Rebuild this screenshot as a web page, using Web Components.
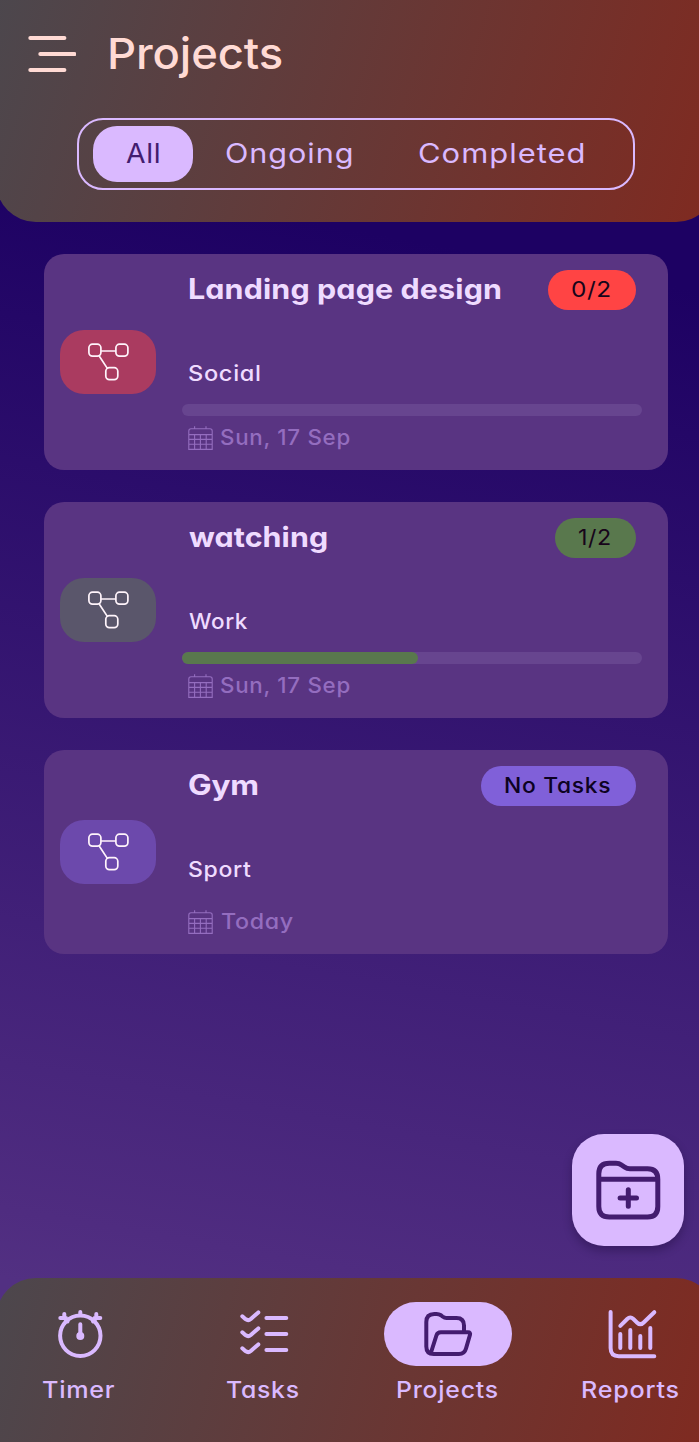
<!DOCTYPE html>
<html lang="en">
<head>
<meta charset="utf-8">
<title>Projects</title>
<style>
html,body{margin:0;height:100%;overflow:hidden;background:#1d0163}
body{font-family:Inter,"Open Sans",sans-serif}
</style>
</head>
<body>
<projects-screen></projects-screen>
<script>
// Text set to a given ink width: glyphs are widened first, the rest goes to letter spacing.
customElements.define('fit-text', class extends HTMLElement{
  constructor(){super();this.attachShadow({mode:'open'}).innerHTML=`<style>
    :host{display:inline-block;flex:none;white-space:nowrap;font-feature-settings:"cv11"}
    span{display:inline-block;transform-origin:0 50%}
  </style><span><slot></slot></span>`}
  connectedCallback(){
    const w=+this.getAttribute('w'),s=this.shadowRoot.querySelector('span'),t=this.textContent,c=getComputedStyle(this);
    const g=document.createElement('canvas').getContext('2d');
    g.font=`${c.fontWeight} ${c.fontSize} ${c.fontFamily}`;
    const m=g.measureText(t),l=-m.actualBoundingBoxLeft,r=m.width-m.actualBoundingBoxRight;
    const ink=s.getBoundingClientRect().width-l-r,gaps=t.length-1;
    const track=(parseFloat(c.getPropertyValue('--track'))||0)*parseFloat(c.fontSize);
    const sx=Math.min(1.14,Math.max(1,w/(ink+gaps*track)));
    s.style.letterSpacing=((w-.6)/sx-ink)/gaps+'px';
    s.style.transform=`scaleX(${sx})`;
    s.style.marginLeft=(-.2-l*sx)+'px';
    this.style.width=w+'px';
  }
});

customElements.define('filter-tab', class extends HTMLElement{
  constructor(){super();this.attachShadow({mode:'open'}).innerHTML=`<style>
    :host{display:flex;align-items:center;height:56px;box-sizing:border-box;padding:0 33.2px;border-radius:24px;color:#dab9ff;font-size:27.4px;line-height:53px;--track:.035}
    :host([active]){background:#dab9ff;color:#431c6f}
    ::slotted(fit-text){margin-top:-2px}
  </style><slot></slot>`}
});

customElements.define('app-header', class extends HTMLElement{
  constructor(){super();this.attachShadow({mode:'open'}).innerHTML=`<style>
    :host{display:block;box-sizing:border-box;width:720px;height:222px;margin-left:-4px;padding:18px 0 0 32px;border-radius:0 0 40px 40px;background:linear-gradient(107deg,#4c474d,#802a20)}
    .top{display:flex;align-items:center;height:72px;gap:34.5px;color:#ffdad4;font-size:42.8px;font-weight:500}
    .top fit-text{position:relative;top:-1px}
    .tabs{display:flex;box-sizing:border-box;width:558px;height:72px;margin:28px 0 0 49.3px;padding:6px 14px;border:2px solid #dab9ff;border-radius:26px}
    svg{display:block}
  </style>
  <div class="top"><svg width="48" height="36" viewBox="0 0 48 36" fill="none" stroke="currentColor" stroke-width="4" stroke-linecap="round"><path d="M2.3 2H36.4M12.3 18H46.4M2.3 34H36.4"/></svg><fit-text w="172.5">Projects</fit-text></div>
  <div class="tabs"><filter-tab active><fit-text w="33.6">All</fit-text></filter-tab><filter-tab><fit-text w="126">Ongoing</fit-text></filter-tab><filter-tab><fit-text w="165">Completed</fit-text></filter-tab></div>`}
});

customElements.define('project-card', class extends HTMLElement{
  connectedCallback(){
    const a=n=>this.getAttribute(n),p=a('progress');
    this.attachShadow({mode:'open'}).innerHTML=`<style>
    :host{display:grid;grid-template-columns:96px 460px;column-gap:26px;align-items:center;box-sizing:border-box;width:624px;padding:16px;border-radius:20px;background:#593482;color:#efdbff;--track:.035}
    .icon{height:64px;border-radius:24px;background:${a('tint')}}
    svg{display:block;flex:none}
    .row{display:flex;align-items:center;padding:0 6px}
    .head{height:40px;justify-content:space-between;font-size:27.8px;font-weight:650}
    .head>fit-text{position:relative;top:-.6px;left:1px;--track:.005}
    .chip{display:flex;height:40px;box-sizing:border-box;padding:0 25.5px 0 24.8px;border-radius:20px;background:${a('color')};color:#17051a;font-size:21.4px;line-height:38px;font-weight:400}
    .chip.med{font-weight:500;color:#0d0222}
    .tag{height:30px;margin-top:48px;padding-left:6.7px;font-size:21.4px;font-weight:500}
    .bar{height:12px;margin-top:16px;border-radius:6px;background:#67458f}
    .fill{height:12px;border-radius:6px;background:${a('color')};width:${p}px}
    .date{height:32px;margin-top:${p===null?'22px':'6px'};gap:8.2px;color:#946dbf;font-size:21.4px;font-weight:500}
    .date fit-text{position:relative;top:-.6px}
  </style>
  <div class="icon"><svg width="96" height="64" viewBox="0 0 96 64" fill="none" stroke="#fff4fb" stroke-width="1.7"><rect x="28.9" y="14.2" width="12" height="12" rx="3.6"/><rect x="55.9" y="14.2" width="12" height="12" rx="3.6"/><rect x="45.8" y="37.7" width="12" height="12" rx="3.6"/><path d="M41 21H56M39.2 26L47.5 38.6"/></svg></div>
  <div>
    <div class="row head"><fit-text w="${a('tw')}">${a('name')}</fit-text><div class="chip ${p===null?'med':''}"><fit-text w="${a('cw')}">${a('count')}</fit-text></div></div>
    <div class="row tag"><fit-text w="${a('gw')}">${a('tag')}</fit-text></div>
    ${p===null?'':'<div class="bar"><div class="fill"></div></div>'}
    <div class="row date"><svg width="25" height="24" viewBox="0 0 25 24" fill="none" stroke="currentColor" stroke-width="1.1"><path d="M.8 23.4V5Q.8 2.7 3 2.7H22Q24.2 2.7 24.2 5V23.4ZM.8 8.6H24.2M.8 13.4H24.2M.8 18.3H24.2M6.6 8.6V23.4M12.4 8.6V23.4M18.2 8.6V23.4M6.6 .2V2.7M18 .2V2.7"/></svg><fit-text w="${a('dw')}">${a('date')}</fit-text></div>
  </div>`}
});

customElements.define('add-button', class extends HTMLElement{
  constructor(){super();this.attachShadow({mode:'open'}).innerHTML=`<style>
    :host{display:block;width:112px;height:112px;border-radius:32px;background:#dab9ff;box-shadow:0 5px 10px rgba(15,0,40,.3)}
    svg{display:block}
  </style><svg width="112" height="112" viewBox="0 0 112 112" fill="none" stroke="#431c6f" stroke-width="5" stroke-linecap="round" stroke-linejoin="round"><path d="M26.8 45.3V39.7Q26.8 29.2 37.3 29.2H44Q47 29.2 49.5 31L52.5 33Q55 34.8 58 34.8H75.5Q85.8 34.8 85.8 45.3V72.6Q85.8 83.1 75.5 83.1H37.3Q26.8 83.1 26.8 72.6V45.3H85.8M56.3 55.8V72.2M48.1 64H64.5"/></svg>`}
});

customElements.define('nav-item', class extends HTMLElement{
  constructor(){super();this.attachShadow({mode:'open'}).innerHTML=`<style>
    :host{display:flex;flex-direction:column;align-items:center;width:184px;color:#dab9ff;font-size:23.3px;font-weight:500;--track:.035}
    .pill{display:flex;align-items:center;justify-content:center;width:128px;height:64px;border-radius:32px}
    :host([active]) .pill{background:#dab9ff;color:#431c6f}
    .label{height:32px;line-height:32px;margin:7.5px 0 0 -1.5px}
  </style><div class="pill"><slot name="icon"></slot></div><div class="label"><slot></slot></div>`}
});

customElements.define('bottom-nav', class extends HTMLElement{
  constructor(){super();this.attachShadow({mode:'open'}).innerHTML=`<style>
    :host{display:flex;box-sizing:border-box;width:720px;height:164px;margin-left:-4px;border-radius:40px 40px 0 0;background:linear-gradient(105deg,#4c474d,#802a20);overflow:hidden}
    nav{display:flex;margin-left:-8px;padding-top:24px}
    svg{display:block;overflow:visible;fill:none;stroke:currentColor;stroke-width:4;stroke-linecap:round;stroke-linejoin:round}
  </style><nav>
  <nav-item><svg slot="icon" width="48" height="48" viewBox="0 0 48 48"><circle cx="24.3" cy="25.8" r="20.2"/><path d="M24.3 2V5M4.3 8H10M8.3 4V8L11.5 11.5M44.3 8H38.6M40.3 4V8L37.1 11.5M24.3 14.3V25"/><circle cx="24.3" cy="26" r="2"/></svg><fit-text w="72">Timer</fit-text></nav-item>
  <nav-item><svg slot="icon" width="48" height="48" viewBox="0 0 48 48"><path d="M2.3 6.3L5.6 9.2Q8.3 11.2 10.8 9L18.3 2.4M2.3 22.3L5.6 25.2Q8.3 27.2 10.8 25L18.3 18.4M2.3 38.3L5.6 41.2Q8.3 43.2 10.8 41L18.3 34.4M26.4 8H46.3M26.4 24H46.3M26.4 40H46.3"/></svg><fit-text w="72">Tasks</fit-text></nav-item>
  <nav-item active><svg slot="icon" width="48" height="48" viewBox="0 0 48 48"><path d="M40 21.5V15.5Q40 8 32.5 8H22.5Q20.5 8 18.5 6.5L17 5.3Q15 4 12.5 4H10.3Q2.3 4 2.3 12V36.5Q2.3 44 9.8 44H35Q40.5 44 42 38.5L46 24.8Q46.7 22.3 44 22.3H16.8Q13.4 22.3 12.4 25.5L7 42.5"/></svg><fit-text w="101">Projects</fit-text></nav-item>
  <nav-item><svg slot="icon" width="48" height="48" viewBox="0 0 48 48"><path d="M2.6 2V38Q2.6 46.2 10.8 46.2H46.3M12.3 24V38M22.3 20V38M32.3 26V38M42.3 18V38M12.3 15.8L19.2 9Q22.3 6 25.4 9L29.2 12.7Q32.3 15.7 35.4 12.7L46.3 2.2"/></svg><fit-text w="97">Reports</fit-text></nav-item>
  </nav>`}
});

customElements.define('projects-screen', class extends HTMLElement{
  constructor(){super();this.attachShadow({mode:'open'}).innerHTML=`<style>
    :host{display:flex;flex-direction:column;position:relative;width:699px;height:1442px;overflow:hidden;background:linear-gradient(190deg,#1d0163 286px,#4f2c80 1311px,#523082 1380px)}
    main{display:flex;flex-direction:column;gap:32px;flex:1;padding:32px 0 0 44.4px}
    add-button{position:absolute;left:572.4px;top:1134px}
  </style>
  <app-header></app-header>
  <main>
    <project-card name="Landing page design" tw="312" count="0/2" cw="38.5" tag="Social" gw="71" date="Sun, 17 Sep" dw="129.5" progress="0" color="#ff4444" tint="#aa3b60"></project-card>
    <project-card name="watching" tw="138" count="1/2" cw="31.5" tag="Work" gw="59" date="Sun, 17 Sep" dw="129.5" progress="236" color="#59784d" tint="#5a566b"></project-card>
    <project-card name="Gym" tw="69" count="No Tasks" cw="105.5" tag="Sport" gw="62" date="Today" dw="72.5" color="#8060d9" tint="#6c49ac"></project-card>
  </main>
  <bottom-nav></bottom-nav>
  <add-button></add-button>`}
});
</script>
</body>
</html>
